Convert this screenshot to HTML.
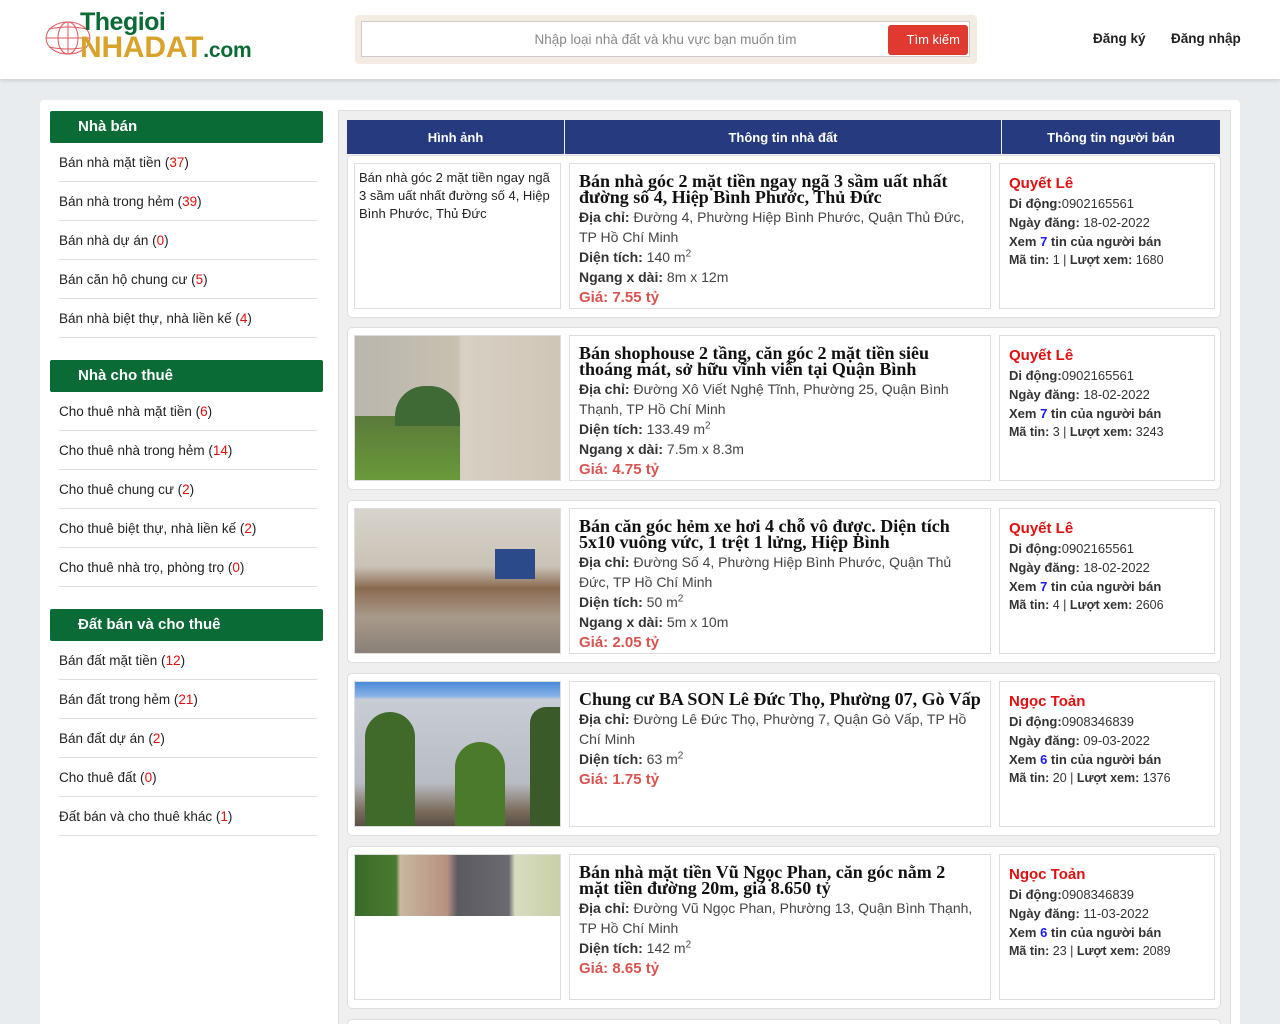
<!DOCTYPE html>
<html><head><meta charset="utf-8">
<style>
*{box-sizing:border-box;margin:0;padding:0}
html{width:1280px;height:1024px;overflow:hidden}
body{width:1280px;height:1024px;overflow:hidden;background:#e9ecef;font-family:"Liberation Sans",Arial,sans-serif;font-size:14px;color:#333;position:relative}
sup{line-height:0;font-size:10px}
.hdr{position:absolute;left:0;top:0;width:1280px;height:79px;background:#fff;box-shadow:0 2px 4px rgba(0,0,0,.12)}
.logo1{position:absolute;left:80px;top:8px;font:bold 25px "Liberation Sans",sans-serif;color:#0b6b36;letter-spacing:-0.5px}
.logo2{position:absolute;left:80px;top:31px;font:bold 30px "Liberation Sans",sans-serif;color:#d9a32b;letter-spacing:-0.2px}
.logo2 span{color:#0b6b36;font-size:21px}
.srch{position:absolute;left:355px;top:15px;width:622px;height:49px;background:#f3ece3;border-radius:4px}
.srch .in{position:absolute;left:6px;top:6px;width:609px;height:36px;background:#fff;border:1px solid #ccc;text-align:center;line-height:36px;color:#888;font-size:13.5px}
.srch .bt{position:absolute;left:533px;top:10px;width:80px;height:30px;background:#e03a30;border-radius:3px;color:#fff;font-size:13px;line-height:30px;text-align:right;padding-right:8px}
.nav{position:absolute;top:31px;font-weight:bold;font-size:13.5px;color:#222}
.main{position:absolute;left:40px;top:100px;width:1200px;height:930px;background:#fff;border-radius:4px}
.side{position:absolute;left:50px;width:273px}
.sh{height:32px;background:#0b6b36;color:#fff;font-weight:bold;font-size:15px;line-height:32px;padding-left:28px;border-radius:2px}
.si{margin-left:9px;width:258px;height:39px;line-height:39px;border-bottom:1px solid #ddd;font-size:13.5px;color:#222}
.si b{font-weight:normal;color:#e01010}
.cont{position:absolute;left:338px;top:110px;width:893px;height:920px;background:#efefef;border:1px solid #ddd}
.th{position:absolute;top:120px;height:34px;background:#263a80;color:#fff;font-weight:bold;font-size:13px;line-height:36px;text-align:center}
.card{position:absolute;left:347px;width:874px;height:163px;background:#fff;border:1px solid #ddd;border-radius:5px}
.c{position:absolute;top:7px;height:146px;border:1px solid #ddd;background:#fff}
.c1{left:6px;width:207px;overflow:hidden}
.c2{left:221px;width:422px;padding:9px 9px}
.c3{left:651px;width:216px;padding:10px 9px}
.t{font:bold 18px/16px "Liberation Serif",serif;color:#111;margin-bottom:2px;width:396px}
.l{font-size:14px;line-height:20px;color:#444}
.l b{color:#333}
.p{color:#d9534f;font-weight:bold;font-size:15px;line-height:22px}
.n{color:#e01010;font-weight:bold;font-size:15px;line-height:20px}
.s{font-size:13px;line-height:19px;color:#333}
.s b{color:#333}
.s i{font-style:normal;color:#1a1aff;font-weight:bold}
.ms{font-size:12.5px}
</style></head><body>
<div class="hdr">
<svg style="position:absolute;left:44px;top:14px" width="50" height="44" viewBox="0 0 50 44"><g fill="none" stroke="#e0575c" stroke-width="1"><ellipse cx="24" cy="24" rx="22" ry="16"/><ellipse cx="24" cy="24" rx="10" ry="16"/><line x1="2" y1="24" x2="46" y2="24"/><line x1="24" y1="8" x2="24" y2="40"/><path d="M5 15 Q24 11 43 15 M5 33 Q24 37 43 33"/></g></svg>
<div class="logo1">Thegioi</div>
<div class="logo2">NHADAT<span>.com</span></div>
<div class="srch"><div class="in">Nhập loại nhà đất và khu vực bạn muốn tìm</div><div class="bt">Tìm kiếm</div></div>
<div class="nav" style="left:1093px">Đăng ký</div>
<div class="nav" style="left:1171px">Đăng nhập</div>
</div>
<div class="main"></div>
<div class="side" style="top:111px">
<div class="sh">Nhà bán</div>
<div class="si">Bán nhà mặt tiền (<b>37</b>)</div>
<div class="si">Bán nhà trong hẻm (<b>39</b>)</div>
<div class="si">Bán nhà dự án (<b>0</b>)</div>
<div class="si">Bán căn hộ chung cư (<b>5</b>)</div>
<div class="si">Bán nhà biệt thự, nhà liền kế (<b>4</b>)</div>
</div>
<div class="side" style="top:360px">
<div class="sh">Nhà cho thuê</div>
<div class="si">Cho thuê nhà mặt tiền (<b>6</b>)</div>
<div class="si">Cho thuê nhà trong hẻm (<b>14</b>)</div>
<div class="si">Cho thuê chung cư (<b>2</b>)</div>
<div class="si">Cho thuê biệt thự, nhà liền kế (<b>2</b>)</div>
<div class="si">Cho thuê nhà trọ, phòng trọ (<b>0</b>)</div>
</div>
<div class="side" style="top:609px">
<div class="sh">Đất bán và cho thuê</div>
<div class="si">Bán đất mặt tiền (<b>12</b>)</div>
<div class="si">Bán đất trong hẻm (<b>21</b>)</div>
<div class="si">Bán đất dự án (<b>2</b>)</div>
<div class="si">Cho thuê đất (<b>0</b>)</div>
<div class="si">Đất bán và cho thuê khác (<b>1</b>)</div>
</div>
<div class="cont"></div>
<div class="th" style="left:347px;width:217px">Hình ảnh</div>
<div class="th" style="left:565px;width:436px">Thông tin nhà đất</div>
<div class="th" style="left:1002px;width:218px">Thông tin người bán</div>

<div class="card" style="top:155px">
<div class="c c1" style="padding:5px 4px;font-size:13px;line-height:18px;color:#222">Bán nhà góc 2 mặt tiền ngay ngã 3 sầm uất nhất đường số 4, Hiệp Bình Phước, Thủ Đức</div>
<div class="c c2"><div class="t">Bán nhà góc 2 mặt tiền ngay ngã 3 sầm uất nhất đường số 4, Hiệp Bình Phước, Thủ Đức</div>
<div class="l"><b>Địa chỉ:</b> Đường 4, Phường Hiệp Bình Phước, Quận Thủ Đức, TP Hồ Chí Minh</div>
<div class="l"><b>Diện tích:</b> 140 m<sup>2</sup></div><div class="l"><b>Ngang x dài:</b> 8m x 12m</div><div class="p">Giá: 7.55 tỷ</div></div>
<div class="c c3"><div class="n">Quyết Lê</div><div class="s"><b>Di động:</b>0902165561</div><div class="s"><b>Ngày đăng:</b> 18-02-2022</div><div class="s"><b>Xem <i>7</i> tin của người bán</b></div><div class="s ms"><b>Mã tin:</b> 1 | <b>Lượt xem:</b> 1680</div></div>
</div>

<div class="card" style="top:327px">
<div class="c c1" style="background:linear-gradient(90deg,#b9b6ae 0,#c8c0b0 50%,#d8d0c4 52%,#cfc6b6 100%)"><div style="position:absolute;left:0;top:80px;width:105px;height:66px;background:linear-gradient(#5a7a3a,#6a9a3a)"></div><div style="position:absolute;left:40px;top:50px;width:65px;height:40px;background:#3f6a35;border-radius:30px 30px 0 0"></div></div>
<div class="c c2"><div class="t">Bán shophouse 2 tầng, căn góc 2 mặt tiền siêu thoáng mát, sở hữu vĩnh viễn tại Quận Bình</div>
<div class="l"><b>Địa chỉ:</b> Đường Xô Viết Nghệ Tĩnh, Phường 25, Quận Bình Thạnh, TP Hồ Chí Minh</div>
<div class="l"><b>Diện tích:</b> 133.49 m<sup>2</sup></div><div class="l"><b>Ngang x dài:</b> 7.5m x 8.3m</div><div class="p">Giá: 4.75 tỷ</div></div>
<div class="c c3"><div class="n">Quyết Lê</div><div class="s"><b>Di động:</b>0902165561</div><div class="s"><b>Ngày đăng:</b> 18-02-2022</div><div class="s"><b>Xem <i>7</i> tin của người bán</b></div><div class="s ms"><b>Mã tin:</b> 3 | <b>Lượt xem:</b> 3243</div></div>
</div>

<div class="card" style="top:500px">
<div class="c c1" style="background:linear-gradient(#d8d4cc 0,#c9c2b6 40%,#8a6a50 55%,#a89a8a 75%,#8a8078 100%)"><div style="position:absolute;left:140px;top:40px;width:40px;height:30px;background:#2a4a8a"></div></div>
<div class="c c2"><div class="t">Bán căn góc hẻm xe hơi 4 chỗ vô được. Diện tích 5x10 vuông vức, 1 trệt 1 lửng, Hiệp Bình</div>
<div class="l"><b>Địa chỉ:</b> Đường Số 4, Phường Hiệp Bình Phước, Quận Thủ Đức, TP Hồ Chí Minh</div>
<div class="l"><b>Diện tích:</b> 50 m<sup>2</sup></div><div class="l"><b>Ngang x dài:</b> 5m x 10m</div><div class="p">Giá: 2.05 tỷ</div></div>
<div class="c c3"><div class="n">Quyết Lê</div><div class="s"><b>Di động:</b>0902165561</div><div class="s"><b>Ngày đăng:</b> 18-02-2022</div><div class="s"><b>Xem <i>7</i> tin của người bán</b></div><div class="s ms"><b>Mã tin:</b> 4 | <b>Lượt xem:</b> 2606</div></div>
</div>

<div class="card" style="top:673px">
<div class="c c1" style="background:linear-gradient(#4a8ad8 0,#8ab4e8 10%,#c8ccd4 12%,#b8bcc4 70%,#7a6a5a 90%,#5a5048 100%)"><div style="position:absolute;left:10px;top:30px;width:50px;height:115px;background:#3f6a2a;border-radius:25px 25px 0 0"></div><div style="position:absolute;left:100px;top:60px;width:50px;height:85px;background:#4a7a2a;border-radius:25px 25px 0 0"></div><div style="position:absolute;left:175px;top:25px;width:32px;height:120px;background:#3a5a2a;border-radius:16px 0 0 0"></div></div>
<div class="c c2"><div class="t" style="width:410px">Chung cư BA SON Lê Đức Thọ, Phường 07, Gò Vấp</div>
<div class="l"><b>Địa chỉ:</b> Đường Lê Đức Thọ, Phường 7, Quận Gò Vấp, TP Hồ Chí Minh</div>
<div class="l"><b>Diện tích:</b> 63 m<sup>2</sup></div><div class="p">Giá: 1.75 tỷ</div></div>
<div class="c c3"><div class="n">Ngọc Toản</div><div class="s"><b>Di động:</b>0908346839</div><div class="s"><b>Ngày đăng:</b> 09-03-2022</div><div class="s"><b>Xem <i>6</i> tin của người bán</b></div><div class="s ms"><b>Mã tin:</b> 20 | <b>Lượt xem:</b> 1376</div></div>
</div>

<div class="card" style="top:846px">
<div class="c c1"><div style="position:absolute;left:0;top:0;width:205px;height:61px;background:linear-gradient(90deg,#3a6a2a 0,#4a7a30 20%,#c8b8a0 22%,#b89080 45%,#5a5a60 50%,#6a6a70 75%,#d8dcc0 78%,#c8d0a8 100%)"></div></div>
<div class="c c2"><div class="t">Bán nhà mặt tiền Vũ Ngọc Phan, căn góc nằm 2 mặt tiền đường 20m, giá 8.650 tỷ</div>
<div class="l"><b>Địa chỉ:</b> Đường Vũ Ngọc Phan, Phường 13, Quận Bình Thạnh, TP Hồ Chí Minh</div>
<div class="l"><b>Diện tích:</b> 142 m<sup>2</sup></div><div class="p">Giá: 8.65 tỷ</div></div>
<div class="c c3"><div class="n">Ngọc Toản</div><div class="s"><b>Di động:</b>0908346839</div><div class="s"><b>Ngày đăng:</b> 11-03-2022</div><div class="s"><b>Xem <i>6</i> tin của người bán</b></div><div class="s ms"><b>Mã tin:</b> 23 | <b>Lượt xem:</b> 2089</div></div>
</div>
<div class="card" style="top:1019px;height:5px;border-bottom:none;border-radius:5px 5px 0 0"></div>
</body></html>
